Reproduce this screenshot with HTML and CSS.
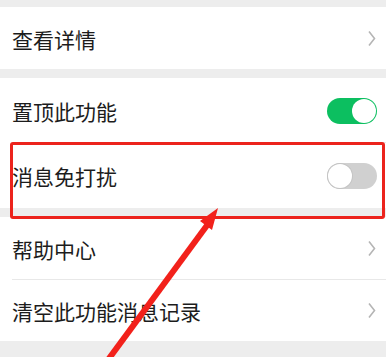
FILE: index.html
```html
<!DOCTYPE html>
<html lang="zh">
<head>
<meta charset="utf-8">
<link rel="stylesheet" href="styles.css">
</head>
<body>
<div class="page">
  <div class="group">
    <div class="row r62"><span class="label">查看详情</span><span class="chev"><svg width="8" height="17" viewBox="0 0 8 17"><path d="M1 1.5 L6.5 8.5 L1 15.5" fill="none" stroke="#b5b5b5" stroke-width="1.6"/></svg></span></div>
  </div>
  <div class="group">
    <div class="row r65 sep"><span class="label">置顶此功能</span><span class="switch on"><span class="knob"></span></span></div>
    <div class="row r65"><span class="label">消息免打扰</span><span class="switch off"><span class="knob"></span></span></div>
  </div>
  <div class="group">
    <div class="row r63 sep"><span class="label">帮助中心</span><span class="chev"><svg width="8" height="17" viewBox="0 0 8 17"><path d="M1 1.5 L6.5 8.5 L1 15.5" fill="none" stroke="#b5b5b5" stroke-width="1.6"/></svg></span></div>
    <div class="row r61"><span class="label">清空此功能消息记录</span><span class="chev"><svg width="8" height="17" viewBox="0 0 8 17"><path d="M1 1.5 L6.5 8.5 L1 15.5" fill="none" stroke="#b5b5b5" stroke-width="1.6"/></svg></span></div>
  </div>
</div>
<div class="highlight"></div>
<svg class="arrow" width="386" height="357" viewBox="0 0 386 357">
  <line x1="102" y1="368" x2="208" y2="224" stroke="#f2211b" stroke-width="6"/>
  <polygon points="218,208 212,230 200,221" fill="#f2211b"/>
</svg>
</body>
</html>
```
FILE: styles.css
```css
html, body {
  margin: 0;
  padding: 0;
  background: #ededed;
  width: 386px;
  height: 357px;
  overflow: hidden;
}
.page {
  padding-top: 7px;
  display: flex;
  flex-direction: column;
  gap: 9px;
  font-family: "Noto Sans CJK SC", "Noto Sans", sans-serif;
}
.group {
  background: #ffffff;
  display: flex;
  flex-direction: column;
}
.row {
  display: flex;
  align-items: center;
  justify-content: space-between;
  padding-left: 12px;
  position: relative;
  box-sizing: border-box;
}
.r62 { height: 62px; }
.r65 { height: 65px; }
.r63 { height: 63px; }
.r61 { height: 61px; }
.sep::after {
  content: "";
  position: absolute;
  left: 12px;
  right: 0;
  bottom: 0;
  height: 1px;
  background: #e8e8e8;
}
.label {
  font-size: 21px;
  color: #1c1c1c;
  line-height: 1;
  padding-top: 2px;
}
.chev {
  display: flex;
  margin-right: 10px;
}
.switch {
  width: 50px;
  height: 26px;
  border-radius: 13px;
  margin-right: 9px;
  box-sizing: border-box;
  position: relative;
  display: flex;
  align-items: center;
}
.switch.on {
  background: #0cbf60;
  justify-content: flex-end;
}
.switch.off {
  background: #d0d0d0;
  justify-content: flex-start;
}
.knob {
  width: 24px;
  height: 24px;
  border-radius: 50%;
  background: #ffffff;
  margin: 0 1px;
}
.switch.off .knob {
  box-shadow: 0 0 0 1px #c4c4c4;
}
.highlight {
  position: absolute;
  left: 10px;
  top: 142px;
  width: 375px;
  height: 77px;
  box-sizing: border-box;
  border: 3px solid #ec231c;
  border-radius: 3px;
}
.arrow {
  position: absolute;
  left: 0;
  top: 0;
}
```
